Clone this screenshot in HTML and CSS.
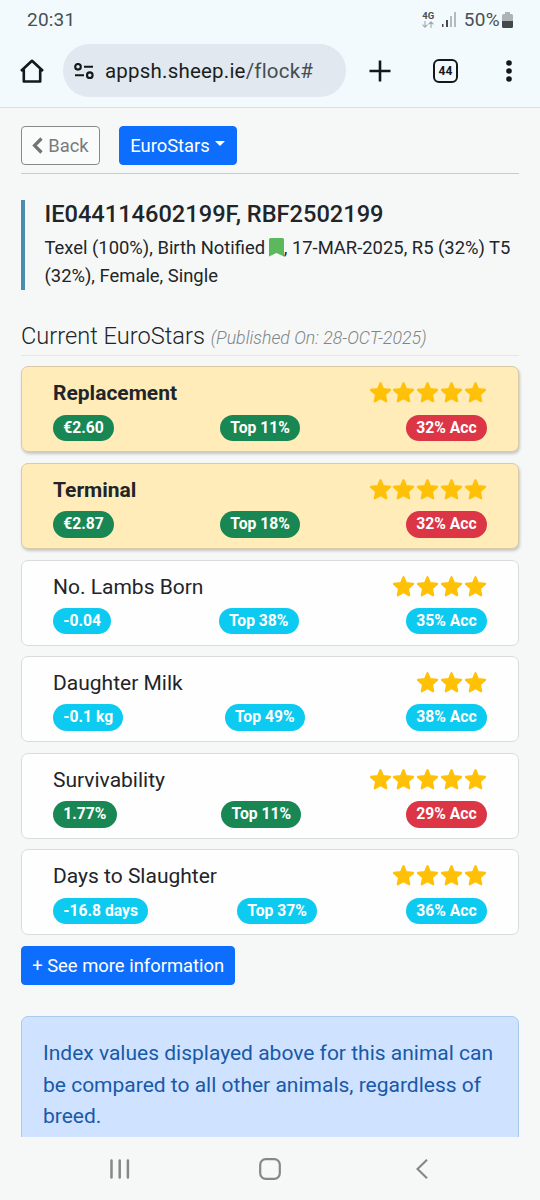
FILE: index.html
```html
<!DOCTYPE html>
<html lang="en">
<head>
<meta charset="utf-8">
<title>EuroStars</title>
<link rel="stylesheet" href="styles.css">
</head>
<body>
<svg class="defs" width="0" height="0" aria-hidden="true">
  <symbol id="star" viewBox="0 0 24 24"><path d="M12 2.200 L14.700 8.400 L22 9.300 L16.600 14 L18 21.200 L12 17.900 L6 21.200 L7.400 14 L2 9.300 L9.300 8.400 Z" fill="#ffc107" stroke="#ffc107" stroke-width="2.200" stroke-linejoin="round"/></symbol>
</svg>
<div class="phone">
  <header class="chrome">
    <div class="status">
      <span class="clock">20:31</span>
      <span class="net"><b>4G</b>
        <svg width="12" height="7" viewBox="0 0 12 7" fill="none" stroke="#a3aaad" stroke-width="1.100"><path d="M3 0V6M.5 3.700 3 6.200 5.500 3.700M9 7V1M6.500 3.300 9 .8 11.500 3.300"/></svg>
      </span>
      <svg class="signal" width="15" height="15" viewBox="0 0 15 15"><path d="M0 12h1.500v3H0z M4 8h2v7H4z" fill="#444a4d"/><path d="M8 4h2v11H8z M12 0h2v15h-2z" fill="#b4babd"/></svg>
      <span class="percent">50%</span>
      <svg class="battery" width="11" height="16" viewBox="0 0 11 16"><path d="M3 0h5v2h1.500q1.500 0 1.500 1.500V9H0V3.500Q0 2 1.500 2H3z" fill="#aeb3b5"/><path d="M0 9h11v5.500q0 1.500-1.500 1.500h-8Q0 16 0 14.500z" fill="#43484a"/></svg>
    </div>
    <div class="toolbar">
      <svg class="home" width="24" height="24" viewBox="0 0 24 24" fill="none" stroke="#14181b" stroke-width="2.600" stroke-linejoin="round"><path d="M1 12 12 1.800 23 12M3.800 10.500V22.500H20.200V10.500" /></svg>
      <div class="omnibox">
        <svg width="20" height="16" viewBox="0 0 20 16" fill="none" stroke="#14181b" stroke-width="2.100"><circle cx="4" cy="3.800" r="2.800"/><path d="M10 3.800h9M1 12.200h9"/><circle cx="15.800" cy="12.200" r="2.800"/></svg>
        <span class="url">appsh.sheep.ie<i>/flock#</i></span>
      </div>
      <svg class="plus" width="22" height="22" viewBox="0 0 22 22" stroke="#14181b" stroke-width="2.600"><path d="M.500 11H21.500M11 .500V21.500"/></svg>
      <span class="tabs">44</span>
      <svg class="dots" width="6" height="22" viewBox="0 0 6 22" fill="#14181b"><circle cx="3" cy="3" r="2.800"/><circle cx="3" cy="11" r="2.800"/><circle cx="3" cy="19" r="2.800"/></svg>
    </div>
  </header>
  <main class="page">
    <nav class="actions">
      <button class="btn back"><svg width="11" height="17" viewBox="0 0 11 17" fill="none" stroke="#6f7477" stroke-width="3.200"><path d="M9.500 1.500 2.500 8.500 9.500 15.500"/></svg>Back</button>
      <button class="btn primary">EuroStars<span class="caret"></span></button>
    </nav>
    <section class="animal">
      <h1>IE044114602199F, RBF2502199</h1>
      <p>Texel (100%), Birth Notified <svg class="mark" width="15" height="19" viewBox="0 0 15 19"><path d="M1.500 0h12Q15 0 15 1.500V18.500L7.500 15 0 18.500V1.500Q0 0 1.500 0z" fill="#5cb85c"/></svg>, 17-MAR-2025, R5 (32%) T5<br>(32%), Female, Single</p>
    </section>
    <h2>Current EuroStars <em>(Published On: 28-OCT-2025)</em></h2>
    <section class="cards">
      <article class="card gold"><div class="row"><h3>Replacement</h3><span class="stars"><svg><use href="#star"/></svg><svg><use href="#star"/></svg><svg><use href="#star"/></svg><svg><use href="#star"/></svg><svg><use href="#star"/></svg></span></div><div class="row badges"><span class="badge green">€2.60</span><span class="badge green">Top 11%</span><span class="badge red">32% Acc</span></div></article>
      <article class="card gold"><div class="row"><h3>Terminal</h3><span class="stars"><svg><use href="#star"/></svg><svg><use href="#star"/></svg><svg><use href="#star"/></svg><svg><use href="#star"/></svg><svg><use href="#star"/></svg></span></div><div class="row badges"><span class="badge green">€2.87</span><span class="badge green">Top 18%</span><span class="badge red">32% Acc</span></div></article>
      <article class="card"><div class="row"><h3>No. Lambs Born</h3><span class="stars"><svg><use href="#star"/></svg><svg><use href="#star"/></svg><svg><use href="#star"/></svg><svg><use href="#star"/></svg></span></div><div class="row badges"><span class="badge cyan">-0.04</span><span class="badge cyan">Top 38%</span><span class="badge cyan">35% Acc</span></div></article>
      <article class="card"><div class="row"><h3>Daughter Milk</h3><span class="stars"><svg><use href="#star"/></svg><svg><use href="#star"/></svg><svg><use href="#star"/></svg></span></div><div class="row badges"><span class="badge cyan">-0.1 kg</span><span class="badge cyan">Top 49%</span><span class="badge cyan">38% Acc</span></div></article>
      <article class="card"><div class="row"><h3>Survivability</h3><span class="stars"><svg><use href="#star"/></svg><svg><use href="#star"/></svg><svg><use href="#star"/></svg><svg><use href="#star"/></svg><svg><use href="#star"/></svg></span></div><div class="row badges"><span class="badge green">1.77%</span><span class="badge green">Top 11%</span><span class="badge red">29% Acc</span></div></article>
      <article class="card"><div class="row"><h3>Days to Slaughter</h3><span class="stars"><svg><use href="#star"/></svg><svg><use href="#star"/></svg><svg><use href="#star"/></svg><svg><use href="#star"/></svg></span></div><div class="row badges"><span class="badge cyan">-16.8 days</span><span class="badge cyan">Top 37%</span><span class="badge cyan">36% Acc</span></div></article>
    </section>
    <button class="btn primary more">+ See more information</button>
    <p class="notice">Index values displayed above for this animal can<br>be compared to all other animals, regardless of<br>breed.</p>
  </main>
  <footer class="navbar">
    <svg width="20" height="20" viewBox="0 0 20 20" stroke="#858788" stroke-width="2.500" stroke-linecap="round"><path d="M1.500 1.500V18.500M9.700 1.500V18.500M17.900 1.500V18.500"/></svg>
    <svg width="22" height="22" viewBox="0 0 22 22" fill="none" stroke="#858788" stroke-width="2.200"><rect x="1.200" y="1.200" width="19.600" height="19.600" rx="5.500"/></svg>
    <svg width="12" height="20" viewBox="0 0 12 20" fill="none" stroke="#858788" stroke-width="2.200"><path d="M11 .800 1.500 10 11 19.200"/></svg>
  </footer>
</div>
</body>
</html>
```
FILE: styles.css
```css
* { box-sizing: border-box; }
body { margin: 0; font-family: Roboto, "Liberation Sans", sans-serif; color: #212529; background: #f6f8f8; }
h1, h2, h3, p { margin: 0; }
svg { flex: none; }
.defs { display: block; }
.phone { width: 540px; height: 1200px; display: flex; flex-direction: column; overflow: hidden; }

.chrome { flex: none; height: 108px; background: #f2fafd; border-bottom: 1px solid #d9dfe2; }
.status { height: 39px; padding: 0 27px 0 27px; display: flex; align-items: center; color: #4a4f52; font-size: 19px; }
.clock { flex: 1; letter-spacing: .2px; }
.net { width: 13px; margin-right: 7px; display: flex; flex-direction: column; align-items: center; gap: 1px; font-size: 9.500px; line-height: 8px; }
.signal { margin-right: 7px; }
.percent { margin-right: 2px; letter-spacing: .3px; }
.toolbar { height: 63px; display: flex; align-items: center; padding: 0 28px 0 20px; }
.home { margin-right: 19px; }
.omnibox { width: 283px; height: 53px; border-radius: 27px; background: #e1e8ef; display: flex; align-items: center; padding-left: 11px; gap: 11px; }
.url { font-size: 20.500px; letter-spacing: .200px; color: #1a1e21; }
.url i { font-style: normal; color: #474c50; }
.plus { margin-left: 23px; }
.tabs { width: 25px; height: 24px; margin-left: 42px; border: 2.500px solid #14181b; border-radius: 6px; font-size: 12px; font-weight: 700; display: flex; align-items: center; justify-content: center; color: #14181b; }
.dots { margin-left: auto; }

.page { flex: none; height: 1029px; overflow: hidden; padding: 18px 21px 0; }
.actions { display: flex; gap: 19px; height: 48px; border-bottom: 1px solid #c8cbcc; }
.btn { height: 39px; border: 1px solid #0d6efd; border-radius: 4px; padding: 0 10.200px; font: 400 18.400px Roboto, sans-serif; display: flex; align-items: center; }
.back { width: 79px; gap: 5px; color: #777b7e; border-color: #858a8d; background: #fafbfb; }
.primary { color: #fff; background: #0d6efd; }
.caret { margin: -4px 0 0 5.500px; border: 5px solid transparent; border-top-color: #fff; border-bottom: 0; }
.animal { margin-top: 26px; height: 90px; border-left: 4px solid #4c8caf; padding-left: 19.500px; }
.animal h1 { font-size: 23.620px; font-weight: 500; line-height: 28px; }
.animal p { font-size: 18.400px; line-height: 27.600px; padding-top: 6px; white-space: nowrap; }
.mark { vertical-align: -3px; margin-left: -1px; }
h2 { margin-top: 31px; height: 35px; border-bottom: 1px solid #e5e8e9; font-size: 23.620px; font-weight: 300; line-height: 30px; white-space: nowrap; }
h2 em { font-size: 17.720px; color: #7f8589; }

.cards { margin-top: 10.400px; display: flex; flex-direction: column; gap: 10.500px; }
.card { height: 86.100px; border: 1px solid #d9dcdd; border-radius: 7px; background: #fefefe; padding: 10px 31px 0; }
.gold { background: #ffecb9; border-color: #d8cba6; box-shadow: 1px 2px 3px rgba(0,0,0,.2); }
.row { display: flex; justify-content: space-between; align-items: center; height: 32px; }
h3 { font-size: 21px; font-weight: 400; }
.gold h3 { font-weight: 700; }
.stars { display: flex; gap: .700px; margin: -1px .500px 0 0; }
.stars svg { width: 23px; height: 23px; }
.badges { height: 27px; margin-top: 5px; }
.badge { height: 26.500px; border-radius: 14px; padding: 0 10.300px; color: #fff; font-size: 15.700px; font-weight: 700; line-height: 25px; }
.green { background: #198754; }
.red { background: #dc3545; }
.cyan { background: #0dcaf0; }
.more { margin-top: 10.300px; }
.notice { margin-top: 31.500px; height: 180px; border: 1px solid #a9ccec; border-radius: 7px; padding: 21px 21px; background: #cfe2ff; color: #1859a8; font-size: 21px; line-height: 31.500px; white-space: nowrap; }

.navbar { flex: 1; display: flex; align-items: center; padding: 0 112px 0 110px; background: #f6f8f8; }
.navbar svg:nth-child(2) { margin: 0 auto 0 129px; }
```
